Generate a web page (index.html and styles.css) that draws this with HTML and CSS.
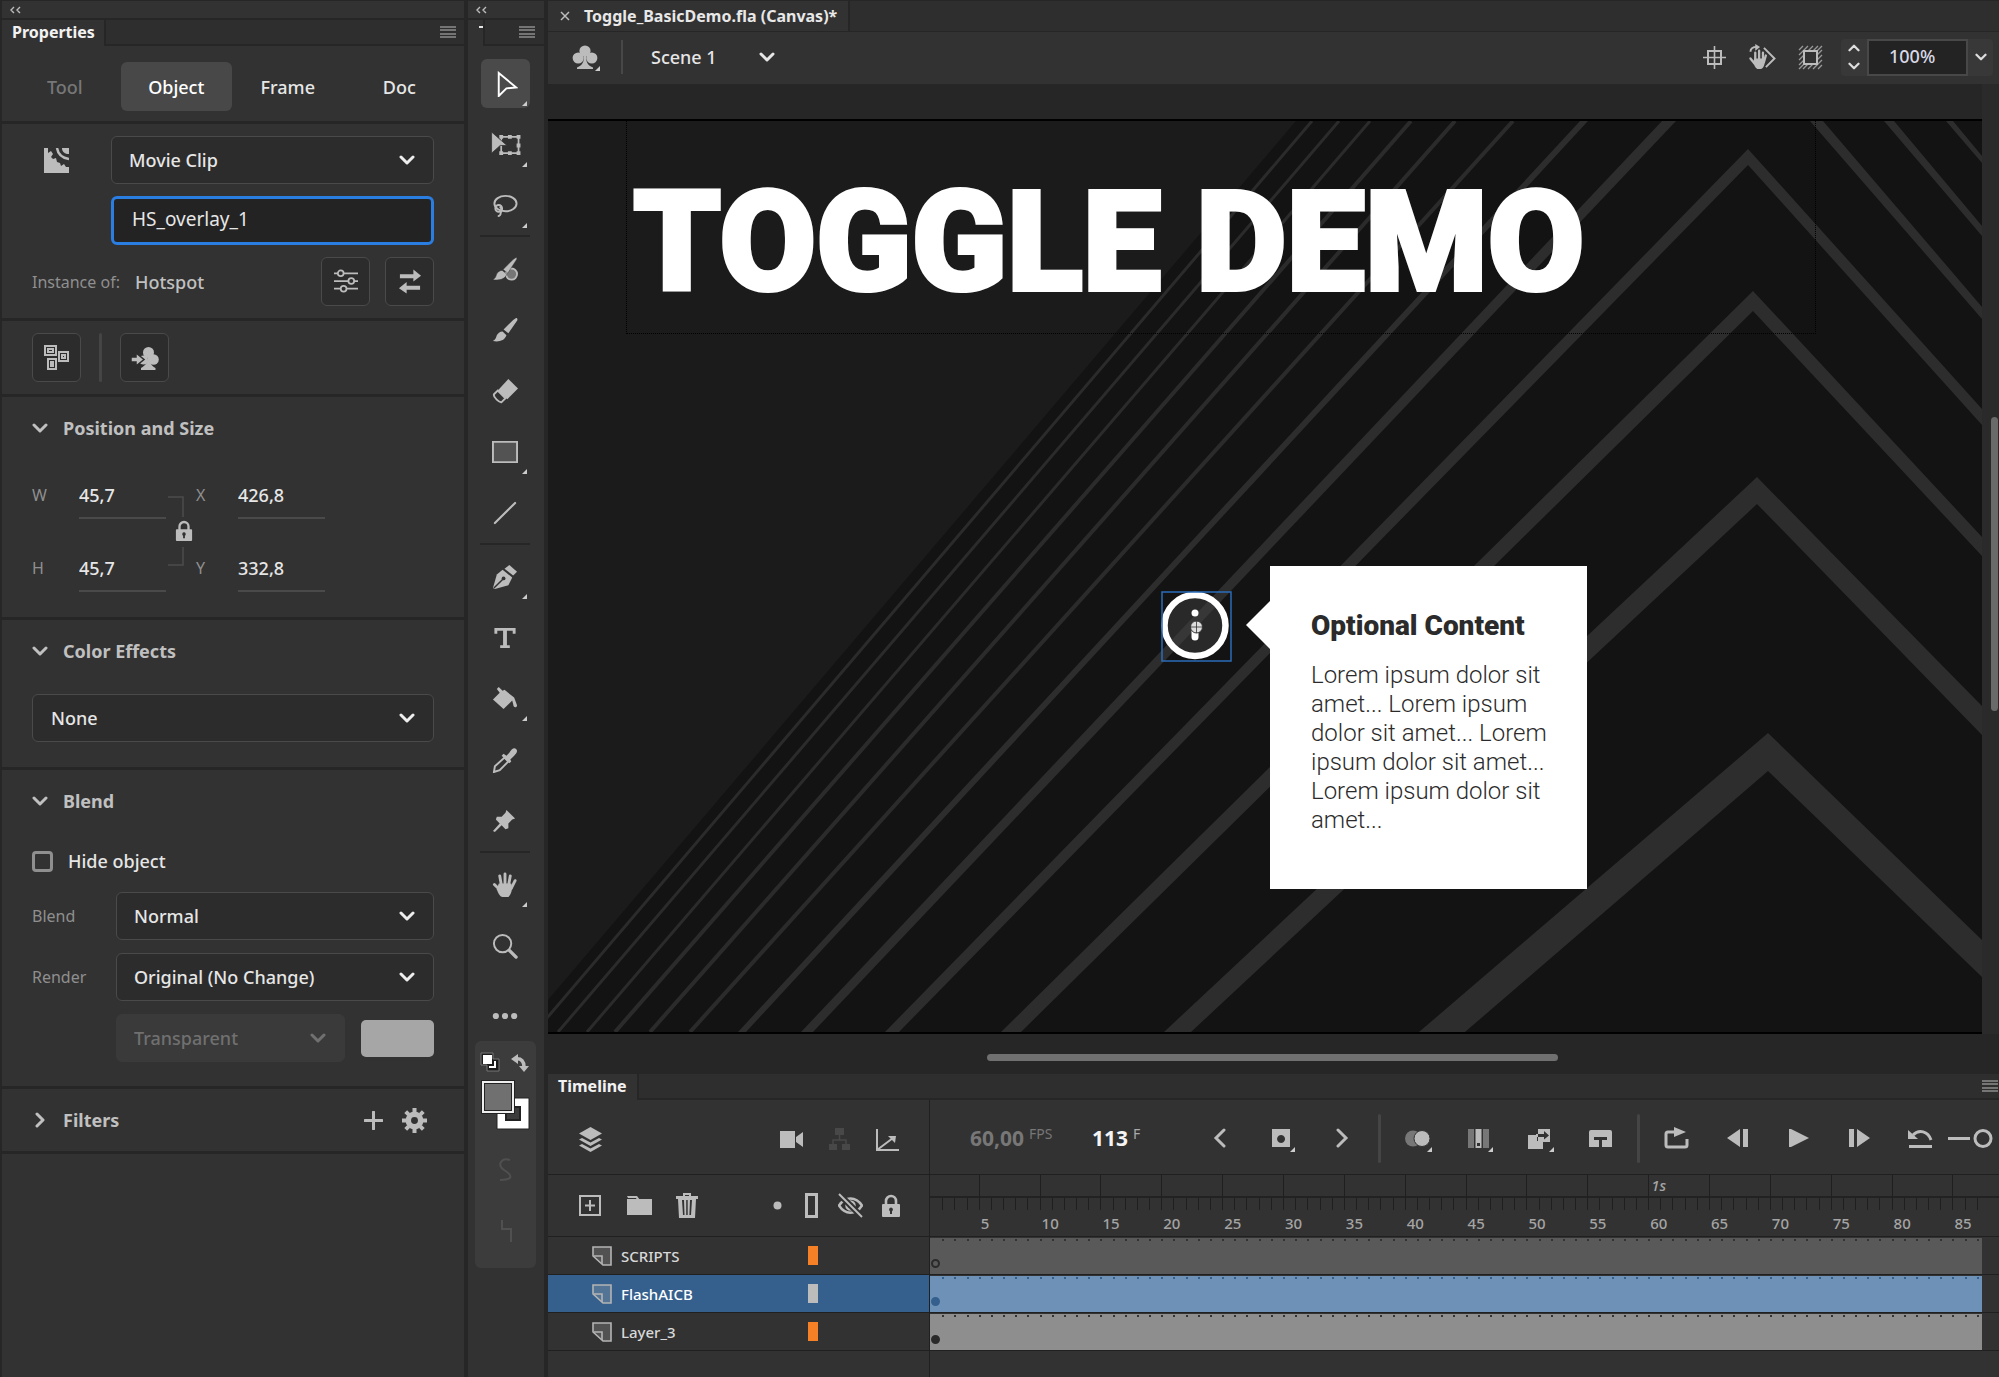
FILE: index.html
```html
<!DOCTYPE html>
<html lang="en">
<head>
<meta charset="utf-8">
<title>Toggle_BasicDemo.fla</title>
<meta name="viewport" content="width=device-width, initial-scale=1">
<link rel="stylesheet" href="styles.css">
</head>
<body>
<svg class="defs" aria-hidden="true">
  <symbol id="chev" viewBox="0 0 16 16"><path d="M2 5l6 6 6-6" fill="none" stroke="currentColor" stroke-width="3" stroke-linecap="round" stroke-linejoin="round"/></symbol>
  <symbol id="menu" viewBox="0 0 16 12"><path d="M0 1h16M0 4h16M0 8h16M0 11h16" stroke="currentColor" stroke-width="1"/></symbol>
  <symbol id="collapse" viewBox="0 0 12 8"><path d="M4 1L1 4l3 3M10 1L7 4l3 3" fill="none" stroke="currentColor" stroke-width="1.4"/></symbol>
  <symbol id="club" viewBox="0 0 26 26"><g fill="currentColor"><circle cx="13" cy="7" r="5.6"/><circle cx="6.2" cy="14" r="5.6"/><circle cx="19.800" cy="14" r="5.600"/><path d="M12 10h2c0 8 1 11 7 13.500V25H5v-1.500C11 21 12 18 12 10z"/></g></symbol>
  <symbol id="lock" viewBox="0 0 20 24"><path d="M5 11V7a5 5 0 0 1 10 0v4" fill="none" stroke="currentColor" stroke-width="2.600"/><path fill="currentColor" fill-rule="evenodd" d="M2 10h16a1 1 0 0 1 1 1v11a1 1 0 0 1-1 1H2a1 1 0 0 1-1-1V11a1 1 0 0 1 1-1zm8 3.500a2 2 0 0 0-1 3.700V20h2v-2.800a2 2 0 0 0-1-3.700z"/></symbol>
  <symbol id="corner" viewBox="0 0 6 6"><path d="M6 0v6H0z" fill="currentColor"/></symbol>
  <symbol id="page" viewBox="0 0 20 20"><path d="M1 1h18v18h-8L1 10z" fill="currentColor" fill-opacity=".25" stroke="currentColor" stroke-width="1.600"/><path d="M2 10h8v8" fill="none" stroke="currentColor" stroke-width="1.600"/></symbol>
</svg>

<main class="app">
  <aside class="panel properties" aria-label="Properties">
    <div class="strip"><svg class="i-collapse"><use href="#collapse"/></svg></div>
    <header class="tabbar"><h1 class="tab">Properties</h1><span class="tab-rest"><svg class="i-menu"><use href="#menu"/></svg></span></header>

    <nav class="modes">
      <button disabled>Tool</button><button class="on">Object</button><button>Frame</button><button>Doc</button>
    </nav>

    <section class="sec instance">
      <div class="line kind">
        <svg class="i25" viewBox="0 0 25 25" fill="#bcbcbc"><path d="M0 0h4v5l3-2 2 3-2 3 2 2 3-1 1 4 3 1 1 3 3-2 2 3 3 0v6H0z"/><path d="M13 0c1 6 5 10 12 11" stroke="#bcbcbc" stroke-width="2.500" fill="none"/><path d="M18 0h7v6c-4 0-7-2-7-6z"/></svg>
        <label class="pick"><select aria-label="Instance type"><option>Movie Clip</option></select><svg class="i-chev"><use href="#chev"/></svg></label>
        <input class="name" aria-label="Instance name" value="HS_overlay_1">
      </div>
      <div class="line of">
        <span class="dim">Instance of:</span><span class="sym">Hotspot</span>
        <button class="sq" aria-label="Settings"><svg class="i25" viewBox="0 0 25 25" fill="none" stroke="#bcbcbc" stroke-width="1.800"><path d="M0 4h4M10 4h15M0 12h15M21 12h4M0 20h7M13 20h12"/><circle cx="7" cy="4" r="3"/><circle cx="18" cy="12" r="3"/><circle cx="10" cy="20" r="3"/></svg></button>
        <button class="sq" aria-label="Swap"><svg class="i25" viewBox="0 0 25 25" fill="#bcbcbc"><path d="M2 5h14V0l8 6.500-8 6V9H2zM23 17H9v-4l-8 6.500 8 5.500v-4h14z"/></svg></button>
      </div>
    </section>

    <section class="sec actions">
      <button class="sq" aria-label="Component parameters"><svg class="i25" viewBox="0 0 25 25" fill="none" stroke="#bcbcbc" stroke-width="2"><path d="M1 1h11v9H1zM15 7h9v9h-9zM4 14h8v10H4z"/><path d="M4 4h5v3H4zM18 10h3v3h-3zM7 17h2v4H7z"/></svg></button>
      <i class="bar"></i>
      <button class="sq" aria-label="Convert to club"><svg class="i27" viewBox="0 0 28 26" fill="#bcbcbc"><circle cx="17.500" cy="7.500" r="5.500"/><circle cx="22.500" cy="14.500" r="5.300"/><circle cx="12.500" cy="15" r="4.500"/><path d="M16.500 11h2c0 7 1 9 6 12v2H10v-2c5-3 6.500-5 6.500-12z"/><path d="M0 12h5V8l8 6.500L5 21v-4H0z" stroke="#2c2c2c" stroke-width="1.500"/></svg></button>
    </section>

    <section class="sec pos">
      <h2><svg class="i-chev"><use href="#chev"/></svg>Position and Size</h2>
      <div class="fields">
        <label for="w">W</label><input id="w" value="45,7"><svg class="link" viewBox="0 0 30 74"><path d="M2 2h15v20M17 52v18H2" fill="none" stroke="#4c4c4c" stroke-width="1.500"/><use href="#lock" x="9" y="25" width="18" height="22"/></svg><label for="x">X</label><input id="x" value="426,8">
        <label for="h">H</label><input id="h" value="45,7"><label for="y">Y</label><input id="y" value="332,8">
      </div>
    </section>

    <section class="sec color">
      <h2><svg class="i-chev"><use href="#chev"/></svg>Color Effects</h2>
      <label class="pick"><select aria-label="Color effect"><option>None</option></select><svg class="i-chev"><use href="#chev"/></svg></label>
    </section>

    <section class="sec blend">
      <h2><svg class="i-chev"><use href="#chev"/></svg>Blend</h2>
      <label class="hide"><input type="checkbox">Hide object</label>
      <div class="rows">
        <label class="dim" for="bm">Blend</label><span class="pick wide"><select id="bm"><option>Normal</option></select><svg class="i-chev"><use href="#chev"/></svg></span>
        <label class="dim" for="rm">Render</label><span class="pick wide"><select id="rm"><option>Original (No Change)</option></select><svg class="i-chev"><use href="#chev"/></svg></span>
        <span class="pick off"><select disabled aria-label="Background"><option>Transparent</option></select><svg class="i-chev"><use href="#chev"/></svg></span><button class="swatch" aria-label="Background color"></button>
      </div>
    </section>

    <section class="sec filters">
      <h2><svg class="i-chev turn"><use href="#chev"/></svg>Filters</h2>
      <button class="bare" aria-label="Add filter"><svg class="i19" viewBox="0 0 19 19"><path d="M9.500 1v17M1 9.500h17" stroke="currentColor" stroke-width="3" stroke-linecap="round"/></svg></button>
      <button class="bare" aria-label="Filter options"><svg class="i25" viewBox="0 0 25 25"><circle cx="12.500" cy="12.500" r="6.200" fill="none" stroke="currentColor" stroke-width="5.500"/><path d="M12.500 0v5M12.500 20v5M0 12.500h5M20 12.500h5M3.700 3.700l3 3M18.300 18.300l3 3M3.700 21.300l3-3M18.300 6.700l3-3" stroke="currentColor" stroke-width="4"/></svg></button>
    </section>
    <div class="sec blank"></div>
  </aside>

  <aside class="panel tools" aria-label="Tools">
    <div class="strip"><svg class="i-collapse"><use href="#collapse"/></svg></div>
    <header class="tabbar"><span class="nub"></span><span class="tab-rest"><svg class="i-menu"><use href="#menu"/></svg></span></header>
    <div class="group">
      <button class="tool on" aria-label="Selection"><svg viewBox="0 0 27 27"><path d="M7 2l18 15-10 1-8 8z" fill="none" stroke="#fff" stroke-width="2"/></svg><svg class="c"><use href="#corner"/></svg></button>
      <button class="tool" aria-label="Free transform"><svg class="big" viewBox="0 0 31 27"><path d="M10 5h18v17H10z" fill="none" stroke="currentColor" stroke-width="1.800"/><path d="M8 3h4v4H8zM17 3h4v4h-4zM26 3h4v4h-4zM26 12h4v4h-4zM26 20h4v4h-4zM17 20h4v4h-4zM8 20h4v4H8z"/><path d="M0 0l16 14H9l-9 8z" stroke="#323232" stroke-width=".8"/></svg><svg class="c"><use href="#corner"/></svg></button>
      <button class="tool" aria-label="Lasso"><svg viewBox="0 0 27 27"><g fill="none" stroke="currentColor" stroke-width="2"><ellipse cx="14" cy="11" rx="11.500" ry="8"/><circle cx="7" cy="16" r="3.500"/><path d="M8 14c4 3 1 5 1 7 0 1-1 3-3 3"/></g></svg><svg class="c"><use href="#corner"/></svg></button>
    </div>
    <div class="group">
      <button class="tool" aria-label="Fluid brush"><svg viewBox="0 0 28 27"><circle cx="21" cy="19" r="6" fill="#777" stroke="currentColor" stroke-width="2"/><path d="M26 1c1 0 1 2 0 3L17 18l-5-4L23 3zM11 15l5 4c-2 6-9 7-15 6 3-2 3-3 4-6 1-2 3-4 6-4z" stroke="#323232" stroke-width=".5"/></svg></button>
      <button class="tool" aria-label="Brush"><svg viewBox="0 0 27 27"><path d="M25 1c1 0 2 1 1 3L17 17l-5-4L22 3zM11 15l4 4c-2 6-8 7-14 6 3-2 3-3 4-6 1-2 3-4 6-4z"/></svg></button>
      <button class="tool" aria-label="Eraser"><svg viewBox="0 0 27 27"><path d="M17 1l10 10-11 11-10-9z"/><path d="M6 13l8 8-4 4c-2 1-9-5-8-8z" fill="none" stroke="currentColor" stroke-width="2"/></svg></button>
      <button class="tool" aria-label="Rectangle"><svg viewBox="0 0 27 27"><path d="M1 3h25v21H1z" fill="#535353" stroke="currentColor" stroke-width="2"/></svg><svg class="c"><use href="#corner"/></svg></button>
      <button class="tool" aria-label="Line"><svg viewBox="0 0 27 27"><path d="M3 24L24 3" stroke="currentColor" stroke-width="2.200" stroke-linecap="round"/></svg></button>
    </div>
    <div class="group">
      <button class="tool" aria-label="Pen"><svg viewBox="0 0 27 27"><path d="M18 1l8 7-4 4-9-7z"/><path d="M11 6l10 8-4 8L3 26l-2-1L5 11z"/><path d="M2 25l9-9" stroke="#323232" stroke-width="1.500"/><circle cx="12" cy="15" r="2" fill="#323232"/></svg><svg class="c"><use href="#corner"/></svg></button>
      <button class="tool" aria-label="Text"><svg viewBox="0 0 27 27"><path d="M2.500 3h22v6h-3V6h-6v15h3v3h-10v-3h3V6h-6v3h-3z"/></svg></button>
      <button class="tool" aria-label="Paint bucket"><svg viewBox="0 0 27 27"><path d="M7 1l4 4 2-1 10 8 3 8c0 3-4 3-4-1l-1-4-9 9L1 14l7-7-3-4z"/></svg><svg class="c"><use href="#corner"/></svg></button>
      <button class="tool" aria-label="Eyedropper"><svg viewBox="0 0 27 27"><path d="M15 9l3-3c2-4 5-6 7-4s1 4-3 8l-3 3 1 2-2 2-8-8 2-2z"/><path d="M13 11l4 4-9 9-6 2 1-6z" fill="none" stroke="currentColor" stroke-width="2"/></svg></button>
      <button class="tool" aria-label="Pin"><svg viewBox="0 0 27 27"><path d="M15 2l9 9-3 1-4 4 0 5-3 1-4-4-7 7-2-1 7-8-4-4 1-3 5 0 4-4z"/></svg></button>
    </div>
    <div class="group">
      <button class="tool" aria-label="Hand"><svg viewBox="0 0 27 27"><g stroke="currentColor" stroke-width="3" stroke-linecap="round"><path d="M8 4l2 11M13.500 2v12M19 4l-2 11M24 9l-4 8M2.500 13l5 5"/></g><path d="M7 12h13l1 5c-1 6-3 9-5 9h-5c-3 0-5-5-6-8z"/></svg><svg class="c"><use href="#corner"/></svg></button>
      <button class="tool" aria-label="Zoom"><svg viewBox="0 0 27 27"><circle cx="11" cy="11" r="9" fill="none" stroke="currentColor" stroke-width="2"/><path d="M18 18l7 7" stroke="currentColor" stroke-width="3.500" stroke-linecap="round"/></svg></button>
    </div>
    <button class="tool more" aria-label="More tools"><svg viewBox="0 0 27 27"><circle cx="4" cy="13.500" r="3.200"/><circle cx="13.500" cy="13.500" r="3.200"/><circle cx="23" cy="13.500" r="3.200"/></svg></button>
    <div class="paint">
      <svg viewBox="0 0 61 227" fill="none">
        <path d="M6 12h12v6h6v12H12v-6H6z" fill="#1c1c1c" stroke="#777"/><path d="M8 14h9v9H8z" fill="#fff"/><path d="M20 20v6h-6" stroke="#fff" stroke-width="2"/>
        <path d="M40 18c7-1 9 3 9 8" stroke="#bcbcbc" stroke-width="3.500"/><path d="M36 18l7-5v10zM44 25h10l-5 6z" fill="#bcbcbc"/>
        <path d="M22 57h32v31H22z" fill="#fff" stroke="#222"/><path d="M31 66h14v13H31z" fill="#3c3c3c" stroke="#222" stroke-width="2"/>
        <path d="M8 41h30v30H8z" fill="#707070" stroke="#222" stroke-width="4"/><path d="M8 41h30v30H8z" stroke="#eee" stroke-width="2"/>
        <path d="M35 119c-8-3-14 5-6 10 10 6 8 10-4 10M27 179v9h9v13" stroke="#505050" stroke-width="2"/>
      </svg>
    </div>
  </aside>

  <div class="doc">
    <header class="doctabs">
      <div class="doctab"><button class="bare" aria-label="Close"><svg class="i10" viewBox="0 0 10 10"><path d="M1 1l8 8M9 1l-8 8" stroke="currentColor" stroke-width="1.500"/></svg></button>Toggle_BasicDemo.fla (Canvas)*</div>
    </header>
    <div class="scenebar">
      <button class="bare club" aria-label="Symbols"><svg class="i26"><use href="#club"/></svg><svg class="c"><use href="#corner"/></svg></button>
      <i class="rule"></i>
      <label class="scene"><select aria-label="Scene"><option>Scene 1</option></select><svg class="i-chev"><use href="#chev"/></svg></label>
      <button class="bare view" aria-label="Center stage"><svg class="i25" viewBox="0 0 25 25" fill="none" stroke="currentColor" stroke-width="1.600"><path d="M6 6h13v13H6z" stroke-width="2"/><path d="M12.500 1v23M1 12.500h23"/></svg></button>
      <button class="bare view" aria-label="Rotate"><svg class="i27" viewBox="0 0 28 27"><path d="M2 8c0-4 3-5 7-5" stroke="currentColor" stroke-width="2" fill="none"/><path d="M7 0l5 3-5 4z" fill="currentColor"/><path d="M16 4l11 11-9 9" stroke="currentColor" stroke-width="2" fill="none"/><path d="M7 9v8M11 7v9M15 9v8M18 12l-2 7M2 15l4 5" stroke="currentColor" stroke-width="2.400" stroke-linecap="round"/><path d="M6 15h11c0 6-1 10-4 11h-4c-3-2-4-6-4-8z" fill="currentColor"/></svg></button>
      <button class="bare view" aria-label="Clip content"><svg class="i25" viewBox="0 0 25 25" fill="none" stroke="currentColor"><path d="M1 5l4-4M1 10l9-9M1 15L15 1M1 20L20 1M1 24L24 1M5 24L24 5M10 24l14-14M15 24l9-9M20 24l4-4" opacity=".75" stroke-width="1.300"/><path d="M6 6h13v13H6z" fill="#323232" stroke-width="2"/></svg></button>
      <div class="zoom">
        <button class="bare steps" aria-label="Step zoom"><svg class="i-chev up"><use href="#chev"/></svg><svg class="i-chev"><use href="#chev"/></svg></button>
        <input value="100%" aria-label="Zoom">
        <button class="bare drop" aria-label="Zoom presets"><svg class="i-chev"><use href="#chev"/></svg></button>
      </div>
    </div>

    <div class="work">
      <div class="stage">
        <svg class="art" viewBox="548 121 1434 911" preserveAspectRatio="xMinYMin slice" aria-hidden="true">
          <path d="M548 121H1982V1032H548z" fill="#131313"/>
          <path d="M548 121H1296L548 1000z" fill="#1b1b1b"/>
          <g stroke="#2b2b2b" fill="none">
            <path stroke-width="3" d="M1312 121L535 1032M1339 121L558 1032M1370 121L587 1032"/>
            <path stroke-width="4" d="M1411 121L615 1032M1455 121L650 1032M1513 121L690 1032"/>
          </g>
          <g fill="#2d2d2d">
            <path d="M1580 121h8L746 1032h-8z"/>
            <path d="M1662 121h14L813 1032h-12z"/>
            <path d="M1748 149L1982 409V425L1748 165L899 1032h-14z"/>
            <path d="M1753 291L1982 537V556L1753 311L1021 1032h-20z"/>
            <path d="M1757 477L1982 706V735L1757 504L1191 1032h-27z"/>
            <path d="M1768 733L1982 940V977L1768 771L1465 1032h-46z"/>
            <path d="M1810 121h13L1982 307v12z"/>
            <path d="M1884 121h10L1982 226v10zM1946 121h7L1982 156v7z"/>
          </g>
        </svg>
        <div class="textbox"><h2>TOGGLE DEMO</h2></div>
        <svg class="hotspot" viewBox="0 0 72 72" aria-label="Info">
          <circle cx="34" cy="34.500" r="30.500" fill="#444" fill-opacity=".45" stroke="#fff" stroke-width="6.500"/>
          <circle cx="34" cy="22" r="3.500" fill="#fff"/><path d="M34 34v12" stroke="#fff" stroke-width="7" stroke-linecap="round"/>
          <circle cx="35.500" cy="36" r="6" fill="#ddd" stroke="#333"/><path d="M35.500 30v12M29.500 36h12" stroke="#333" stroke-width=".8"/>
          <path d="M1 1h69v69H1z" fill="none" stroke="#2b6cb8" stroke-width="1.500"/>
        </svg>
        <div class="callout">
          <h3>Optional Content</h3>
          <p>Lorem ipsum dolor sit<br>amet... Lorem ipsum<br>dolor sit amet... Lorem<br>ipsum dolor sit amet...<br>Lorem ipsum dolor sit<br>amet...</p>
        </div>
      </div>
      <div class="vscroll"><i></i></div>
      <div class="hscroll"><i></i></div>
    </div>

    <section class="timeline" aria-label="Timeline">
      <header class="tabbar"><h2 class="tab">Timeline</h2><span class="tab-rest"><svg class="i-menu"><use href="#menu"/></svg></span></header>
      <div class="tl">
        <div class="lc">
          <svg class="i25 first" viewBox="0 0 25 25" fill="currentColor"><path d="M12.500 0L24 6.500 12.500 13 1 6.500z"/><path d="M1 12.500l3-1.500 8.500 4.500L21 11l3 1.500-11.500 6.500zM1 18.500L4 17l8.500 4.500L21 17l3 1.500L12.500 25z"/></svg>
          <svg class="i25" viewBox="0 0 25 25" fill="currentColor"><path d="M1 4h15v17H1zM17 10l7-5v15l-7-5z"/></svg>
          <svg class="i25 faint" viewBox="0 0 25 25" fill="currentColor"><path d="M8 1h9v7h-9zM2 17h8v6H2zM15 17h8v6h-8z"/><path d="M12.500 8v5M6 17v-4h13v4" fill="none" stroke="currentColor" stroke-width="1.500"/></svg>
          <svg class="i25" viewBox="0 0 25 25" fill="none" stroke="currentColor" stroke-width="2"><path d="M2 2v21h22M2 23L18 11"/><path d="M13 9l8 0-1 7z" fill="currentColor" stroke="none"/></svg>
        </div>
        <div class="rc">
          <span class="fps">60,00<sup>FPS</sup></span><span class="cur">113<sup>F</sup></span>
          <button class="bare t" aria-label="Previous keyframe"><svg class="i20" viewBox="0 0 20 20"><path d="M14 2L6 10l8 8" fill="none" stroke="currentColor" stroke-width="3" stroke-linecap="round"/></svg></button>
          <button class="bare t" aria-label="Insert keyframe"><svg class="i20" viewBox="0 0 20 20"><path fill="currentColor" fill-rule="evenodd" d="M1 1h18v18H1zM10 7a4 4 0 1 0 .1 0z"/></svg><svg class="c"><use href="#corner"/></svg></button>
          <button class="bare t" aria-label="Next keyframe"><svg class="i20" viewBox="0 0 20 20"><path d="M6 2l8 8-8 8" fill="none" stroke="currentColor" stroke-width="3" stroke-linecap="round"/></svg></button>
          <i class="bar"></i>
          <button class="bare t" aria-label="Onion skin"><svg class="i25" viewBox="0 0 25 25"><circle cx="8" cy="12.500" r="8" fill="#777"/><circle cx="17" cy="12.500" r="8" fill="currentColor" stroke="#323232"/></svg><svg class="c"><use href="#corner"/></svg></button>
          <button class="bare t" aria-label="Edit multiple frames"><svg class="i25" viewBox="0 0 25 25"><path d="M2 3h6v19H2zM17 3h6v19h-6z" fill="#777"/><path fill="currentColor" fill-rule="evenodd" d="M9.500 3h6v19h-6zM11 17v3h3v-3z"/></svg><svg class="c"><use href="#corner"/></svg></button>
          <button class="bare t" aria-label="Tween"><svg class="i25" viewBox="0 0 25 25"><path d="M1 9h9v6h6v8H1z" fill="currentColor"/><path fill="currentColor" fill-rule="evenodd" d="M11 3h12v13H11zM9 8h8V5l5 4.500-5 4V11H9z"/></svg><svg class="c"><use href="#corner"/></svg></button>
          <button class="bare t" aria-label="Text tween"><svg class="i25" viewBox="0 0 25 25"><path fill="currentColor" fill-rule="evenodd" d="M3 4h19a2 2 0 0 1 2 2v15H14v-7h5v-3H6v3h5v7H1V6a2 2 0 0 1 2-2z"/></svg></button>
          <i class="bar"></i>
          <button class="bare t" aria-label="Loop"><svg class="i25" viewBox="0 0 25 25"><path d="M12 6H4a2 2 0 0 0-2 2v11a2 2 0 0 0 2 2h17a2 2 0 0 0 2-2v-6" fill="none" stroke="currentColor" stroke-width="3"/><path d="M10 1l12 5-12 5z" fill="currentColor"/></svg></button>
          <button class="bare t" aria-label="Step back"><svg class="i25" viewBox="0 0 25 25" fill="currentColor"><path d="M2 12L15 3v18zM18 3h5v18h-5z"/></svg></button>
          <button class="bare t" aria-label="Play"><svg class="i25" viewBox="0 0 25 25" fill="currentColor"><path d="M3 3h2l18 9L5 21H3z"/></svg></button>
          <button class="bare t" aria-label="Step forward"><svg class="i25" viewBox="0 0 25 25" fill="currentColor"><path d="M2 3h5v18H2zM10 3l13 9-13 9z"/></svg></button>
          <button class="bare t" aria-label="Undo"><svg class="i25" viewBox="0 0 25 25"><path d="M5 9c6-6 15-4 18 5" fill="none" stroke="currentColor" stroke-width="3"/><path d="M0 4v9h10z" fill="currentColor"/><path d="M1 20.500h23" stroke="currentColor" stroke-width="3"/></svg></button>
          <svg class="slide" viewBox="0 0 48 25" fill="none" stroke="currentColor" stroke-width="3"><path d="M1 12.500h22"/><circle cx="36" cy="12.500" r="8"/></svg>
        </div>

        <div class="lc second">
          <svg class="i25" viewBox="0 0 25 25" fill="none" stroke="currentColor" stroke-width="2"><path d="M2 3h20v19H2zM12 7v11M7 12.500h10"/></svg>
          <svg class="i25 folder" viewBox="0 0 25 25" fill="currentColor"><path d="M0 3h10l3 4h-3L9 5H1zM0 6h25v16H0z"/></svg>
          <svg class="i25 last" viewBox="0 0 25 25"><path fill="currentColor" fill-rule="evenodd" d="M2 3h7V0h8v3h7v3h-2l-1 19H5L4 6H2zM11 2v1h4V2zM8 7l1 15h1.500L10 7zM12.200 7v15h1.500V7zM16 7l-.6 15H17l1-15z"/></svg>
          <svg class="dot" viewBox="0 0 9 9"><circle cx="4.500" cy="4.500" r="4" fill="currentColor"/></svg>
          <svg class="i25" viewBox="0 0 25 25"><path d="M7.500 1.500h10v22h-10z" fill="none" stroke="currentColor" stroke-width="3"/></svg>
          <svg class="i25 eye" viewBox="0 0 25 25" fill="none" stroke="currentColor" stroke-width="2.500"><path d="M1 12.500C7 3 18 3 24 12.500 18 22 7 22 1 12.500z"/><circle cx="12.500" cy="12.500" r="4"/><path d="M1 1l23 23" stroke="#323232" stroke-width="6"/><path d="M1 1l23 23" stroke-width="2"/></svg>
          <svg class="i24"><use href="#lock"/></svg>
        </div>
        <div class="ruler"></div>

        <div class="layer"><svg class="i20"><use href="#page"/></svg><span>SCRIPTS</span><i></i></div>
        <div class="track dark"><b class="key"></b></div>
        <div class="layer sel"><svg class="i20"><use href="#page"/></svg><span>FlashAICB</span><i></i></div>
        <div class="track blue"><b class="key"></b></div>
        <div class="layer"><svg class="i20"><use href="#page"/></svg><span>Layer_3</span><i></i></div>
        <div class="track light"><b class="key"></b></div>
        <div class="rest"></div><div class="rest"></div>
      </div>
    </section>
  </div>
</main>
<script src="timeline.js"></script>
</body>
</html>
```
FILE: styles.css
```css
:root {
  --bg: #262626;
  --panel: #323232;
  --field: #2c2c2c;
  --edge: #4a4a4a;
  --icon: #bcbcbc;
  --frame: 1.139%;
}
* { box-sizing: border-box; }
body {
  margin: 0;
  background: var(--bg);
  color: #e6e6e6;
  font: 500 18px/24px "Noto Sans", "Open Sans", sans-serif;
}
h1, h2, h3, p { margin: 0; font-size: inherit; }
button, input, select { font: inherit; color: inherit; margin: 0; border-radius: 0; }
button { padding: 0; border: 0; background: none; }
select { appearance: none; outline: 0; }
input { outline: 0; min-width: 0; }
svg { display: block; flex: none; }
.defs { position: absolute; width: 0; height: 0; }
.i-chev { width: 16px; height: 16px; }
.i-menu { width: 16px; height: 12px; color: var(--icon); }
.i-collapse { width: 12px; height: 8px; color: var(--icon); }
.i10 { width: 10px; height: 10px; }
.i19 { width: 19px; height: 19px; }
.i20 { width: 20px; height: 20px; }
.i24 { width: 20px; height: 24px; }
.i25 { width: 25px; height: 25px; }
.i26 { width: 26px; height: 26px; }
.i27 { width: 28px; height: 26px; }
.bare { display: grid; place-items: center; color: var(--icon); }
.c { width: 5px; height: 5px; color: #ccc; position: absolute; }

.app {
  display: grid;
  grid-template-columns: 462px 76px minmax(0, 1fr);
  column-gap: 4px;
  min-height: 100vh;
  padding: 1px 0 0 2px;
}
.panel { display: flex; flex-direction: column; background: var(--panel); }
.strip { display: flex; align-items: center; height: 19px; padding-left: 8px; border-bottom: 2px solid var(--bg); }
.tabbar { display: flex; height: 26px; }
.tab { padding: 0 9px 0 10px; font-size: 16px; line-height: 25px; font-weight: 700; color: #f2f2f2; }
.tab-rest {
  flex: 1;
  display: flex;
  align-items: center;
  justify-content: flex-end;
  padding-right: 8px;
  background: #2e2e2e;
  border-left: 2px solid var(--bg);
  border-bottom: 2px solid var(--bg);
}
.nub { width: 15px; }
.nub::after { content: ""; display: block; width: 4px; height: 2px; margin: 6px 0 0 11px; background: #e6e6e6; }

/* Properties */
.modes { display: grid; grid-template-columns: repeat(4, 1fr); padding: 16px 9px 10px 7px; }
.modes button { height: 49px; border-radius: 6px; }
.modes button:disabled { color: #777; }
.modes .on { background: #484848; color: #fff; }
.sec { border-top: 3px solid var(--bg); padding: 12px 30px; }
.dim { font-size: 16px; font-weight: 400; color: #8f8f8f; }
.pick { display: grid; grid-template-columns: 1fr 54px; align-items: center; height: 48px; }
.pick select {
  grid-area: 1 / 1 / 2 / 3;
  width: 100%;
  height: 48px;
  padding: 0 17px;
  background: var(--field);
  border: 1px solid var(--edge);
  border-radius: 6px;
}
.pick .i-chev { grid-area: 1 / 2; justify-self: center; pointer-events: none; color: #eee; }
.kind { display: grid; grid-template-columns: 67px 1fr; row-gap: 12px; align-items: center; padding-left: 12px; }
.name { grid-column: 2; height: 49px; padding: 0 18px 4px; font-size: 19px; font-weight: 400; background: #232323; border: 3px solid #2a7de1; border-radius: 6px; }
.of { display: flex; align-items: center; margin-top: 12px; }
.sym { flex: 1; margin-left: 15px; color: #c0c0c0; }
.sq { display: grid; place-items: center; width: 49px; height: 49px; background: var(--field); border: 1px solid var(--edge); border-radius: 6px; }
.of .sq + .sq { margin-left: 15px; }
.of .sq .i25 { width: 24px; }
.actions { display: flex; align-items: center; }
.bar { width: 3px; height: 49px; border-radius: 2px; background: #454545; flex: none; }
.actions .bar { margin: 0 18px; }
.sec h2 { display: flex; align-items: center; gap: 15px; height: 38px; color: #c0c0c0; font-weight: 700; }
.fields {
  display: grid;
  grid-template-columns: 47px 87px 30px 42px 87px;
  row-gap: 37px;
  padding: 36px 0 13px;
  align-items: start;
}
.fields label { font-size: 16px; font-weight: 400; color: #8f8f8f; }
.fields input { width: 87px; height: 36px; padding: 0 0 10px; border: 0; border-bottom: 2px solid #4a4a4a; background: none; }
.fields label:nth-of-type(1), .fields label:nth-of-type(3) { grid-column: 1; }
.fields label:nth-of-type(2), .fields label:nth-of-type(4) { grid-column: 4; }
.fields .link { grid-area: 1 / 3 / 3 / 4; width: 30px; height: 74px; margin-top: 12px; color: var(--icon); }
.color h2 { margin-bottom: 24px; }
.color .pick select { padding: 0 18px; }
.color { padding-bottom: 25px; }
.hide { display: flex; align-items: center; gap: 15px; height: 24px; margin: 29px 0 19px; }
.hide input { appearance: none; width: 21px; height: 21px; border: 3px solid #8f8f8f; border-radius: 4px; }
.rows { display: grid; grid-template-columns: 84px 1fr 73px; gap: 13px 0; align-items: center; }
.wide { grid-column: 2 / 4; }
.off { grid-column: 2; margin-right: 16px; }
.off select { background: #3a3a3a; border-color: #3a3a3a; opacity: 1; color: #707070; }
.off .i-chev { color: #707070; }
.swatch { height: 37px; background: #a6a6a6; border-radius: 5px; }
.blend { padding-bottom: 24px; }
.filters { display: flex; align-items: center; padding-block: 12px; }
.filters h2 { flex: 1; }
.filters .bare { margin-left: 19px; }
.filters .bare:last-child { margin-right: 7px; }
.turn { transform: rotate(-90deg); }

/* Tools */
.tools { color: var(--icon); }
.tools .tab-rest { padding-right: 9px; }
.group { display: grid; justify-content: center; gap: 12px; padding: 7px 0 6px; margin-right: 2px; }
.group:nth-of-type(2) { padding: 13px 0 5px; }
.group + .group { border-top: 2px solid var(--bg); margin: 0 14px 0 12px; }
.tool { position: relative; display: grid; place-items: center; width: 49px; height: 49px; border-radius: 6px; justify-self: center; }
.tool > svg:first-child { width: 26px; height: 26px; fill: currentColor; }
.tool > .big:first-child { width: 31px; margin-left: 2px; }
.tool.on { background: #4a4a4a; }
.tool .c { right: 3px; bottom: 2px; }
.more { align-self: center; margin: 15px 2px 0 0; }
.paint { background: #3c3c3c; border-radius: 6px; width: 61px; height: 227px; margin: 1px 0 0 7px; }

/* Document */
.doc { display: grid; grid-template-rows: 31px 52px minmax(0, 1fr) 303px; min-width: 0; }
.doctabs { background: #2e2e2e; border-bottom: 1px solid var(--bg); display: flex; }
.doctab { display: flex; align-items: center; gap: 14px; padding: 0 11px 0 12px; font-size: 16px; font-weight: 700; background: var(--panel); border-right: 2px solid var(--bg); color: #e8e8e8; }
.scenebar { display: flex; align-items: center; background: var(--panel); padding: 0 6px 2px 0; }
.club { position: relative; margin-left: 24px; }
.scenebar .c { right: -2px; bottom: -1px; }
.rule { width: 2px; height: 34px; margin: 0 28px 0 23px; background: #484848; }
.scene { display: flex; align-items: center; flex: 1; gap: 32px; }
.scene select { border: 0; background: none; padding: 0; width: 76px; }
.view { width: 48px; height: 40px; }
.zoom { display: flex; height: 37px; margin-left: 7px; background: #383838; border-radius: 4px; }
.zoom input { width: 101px; padding: 0 0 3px 20px; background: #232323; border: 2px solid #484848; color: #d8d8e6; }
.steps { width: 26px; }
.drop { width: 25px; }
.zoom .i-chev { width: 12px; height: 12px; color: #ddd; }
.up { transform: rotate(180deg); }

.work { display: grid; grid-template-columns: minmax(0, 1fr) 17px; grid-template-rows: minmax(0, 1fr) 40px; }
.stage { position: relative; margin-top: 35px; border-block: 2px solid #000; overflow: hidden; background: #131313; }
.art { position: absolute; inset: 0; width: 100%; height: 100%; }
.textbox { position: absolute; left: 78px; top: 0; width: 1190px; height: 213px; border: 1px dotted #000; border-top: 0; }
.textbox h2 { padding: 41px 0 0 6px; font: 900 140px/160px Roboto, sans-serif; color: #fff; -webkit-text-stroke: 4px #fff; white-space: nowrap; }
.hotspot { position: absolute; left: 613px; top: 470px; width: 72px; height: 72px; }
.callout { position: absolute; left: 722px; top: 445px; width: 317px; height: 323px; padding: 45px 0 0 41px; background: #fff; color: #2b2b2b; font-family: Roboto, sans-serif; white-space: nowrap; }
.callout::before { content: ""; position: absolute; left: -24px; top: 35px; border: solid transparent; border-width: 24px 24px 24px 0; border-right-color: #fff; }
.callout h3 { font-size: 28px; line-height: 30px; font-weight: 900; }
.callout p { margin-top: 20px; font-size: 24px; line-height: 29px; font-weight: 300; }
.vscroll { display: grid; grid-template-rows: 35fr 31fr 34fr; background: #2a2a2a; padding: 0 1px 0 9px; }
.vscroll i { grid-row: 2; background: #6a6a6a; border-radius: 4px; }
.hscroll { display: grid; grid-template-columns: 306fr 398fr 296fr; padding-top: 20px; }
.hscroll i { grid-column: 2; height: 7px; background: #707070; border-radius: 4px; }

/* Timeline */
.timeline { background: var(--panel); min-width: 0; }
.timeline .tab-rest { padding-right: 1px; }
.timeline .tab { padding-right: 10px; }
.tl { display: grid; grid-template-columns: 382px minmax(0, 1fr); grid-template-rows: 75px 62px 38px 38px 38px 26px; }
.tl > :nth-child(odd) { border-right: 1px solid #202020; }
.tl > * { border-bottom: 1px solid #202020; min-width: 0; }
.tl > .rest { border-bottom: 0; }
.lc { display: flex; align-items: center; padding: 4px 29px 0 30px; gap: 23px; color: var(--icon); }
.first { margin-right: auto; }
.faint { color: #484848; }
.second { padding: 0 28px 0 30px; gap: 0; }
.second .folder { margin-left: 24px; }
.second .last { margin: 0 auto 0 22px; }
.dot { width: 9px; height: 9px; margin-right: 17px; }
.second .eye { margin: 0 18px 0 14px; }
.rc { display: flex; align-items: center; overflow: hidden; color: var(--icon); white-space: nowrap; padding-top: 2px; }
.fps, .cur { font-size: 21px; font-weight: 700; color: #777; margin-left: 40px; flex: none; }
.fps { width: 84px; }
.cur { width: 97px; color: #f4f4f4; margin-left: 38px; }
.rc sup { font-size: 14px; line-height: 0; font-weight: 400; margin-left: 5px; vertical-align: 7px; color: #aaa; }
.fps sup { color: #777; }
.t { position: relative; width: 61px; height: 40px; flex: none; }
.t .c { right: 16px; bottom: 6px; }
.rc .bar { margin: 0 6px; }
.slide { width: 48px; height: 25px; margin-left: -4px; }

.ruler { display: flex; overflow: hidden; background: linear-gradient(#222, #222) 0 21px / 100% 2px no-repeat; font-size: 15px; line-height: 20px; color: #a4a4a4; }
.ruler span { flex: 0 0 var(--frame); display: grid; grid-template-rows: 23px 12px 1fr; grid-template-columns: minmax(0, 1fr); white-space: nowrap; }
.ruler span::before { content: ""; grid-row: 2; border-left: 1px solid #1f1f1f; }
.ruler .five::after { content: ""; grid-area: 1 / 1; border-left: 1px solid #1f1f1f; }
.ruler span:first-child::before { border: 0; }
.ruler em { grid-area: 1 / 1; padding-left: 3px; }
.ruler small { grid-row: 3; padding: 3px 0 0 2px; font-size: inherit; }
.layer { display: flex; align-items: center; padding-left: 44px; font-size: 15px; color: #d8d8d8; }
.layer span { width: 196px; padding-left: 9px; }
.layer i { width: 10px; height: 19px; background: #f58025; }
.layer svg { color: #b4b4b4; }
.sel { background: #355f8c; color: #fff; }
.sel i { background: #bcbcbc; }
.track { position: relative; display: flex; overflow: hidden; padding-top: 1px; background-clip: content-box; }
.track::after { content: ""; position: absolute; right: 0; top: 0; bottom: 0; width: 17px; background: var(--panel); }
.track span { flex: 0 0 var(--frame); height: 2px; margin-top: 1px; }
.track span + span { border-left: 2px solid #333; }
.track.blue span + span { border-color: #355f8c; }
.dark { background-color: #595959; }
.blue { background-color: #6e91b8; }
.light { background-color: #8e8e8e; }
.key { position: absolute; left: 1px; bottom: 6px; width: 9px; height: 9px; border-radius: 50%; border: 2px solid #2a2a2a; }
.light .key { background: #2a2a2a; }
.blue .key { background: #355f8c; border-color: #355f8c; }
```
FILE: timeline.js
```js
// Fill the ruler and the layer tracks with one cell per frame.
var FRAMES = 87;

var ruler = document.querySelector(".ruler");
for (var n = 1; n <= FRAMES; n++) {
  var cell = document.createElement("span");
  if (n % 5 === 0) {
    cell.className = "five";
    var label = document.createElement("small");
    label.textContent = n;
    cell.appendChild(label);
  }
  if (n === 60) {
    var second = document.createElement("em");
    second.textContent = "1s";
    cell.appendChild(second);
  }
  ruler.appendChild(cell);
}

document.querySelectorAll(".track").forEach(function (track) {
  for (var i = 0; i < FRAMES; i++) {
    track.appendChild(document.createElement("span"));
  }
});
```
